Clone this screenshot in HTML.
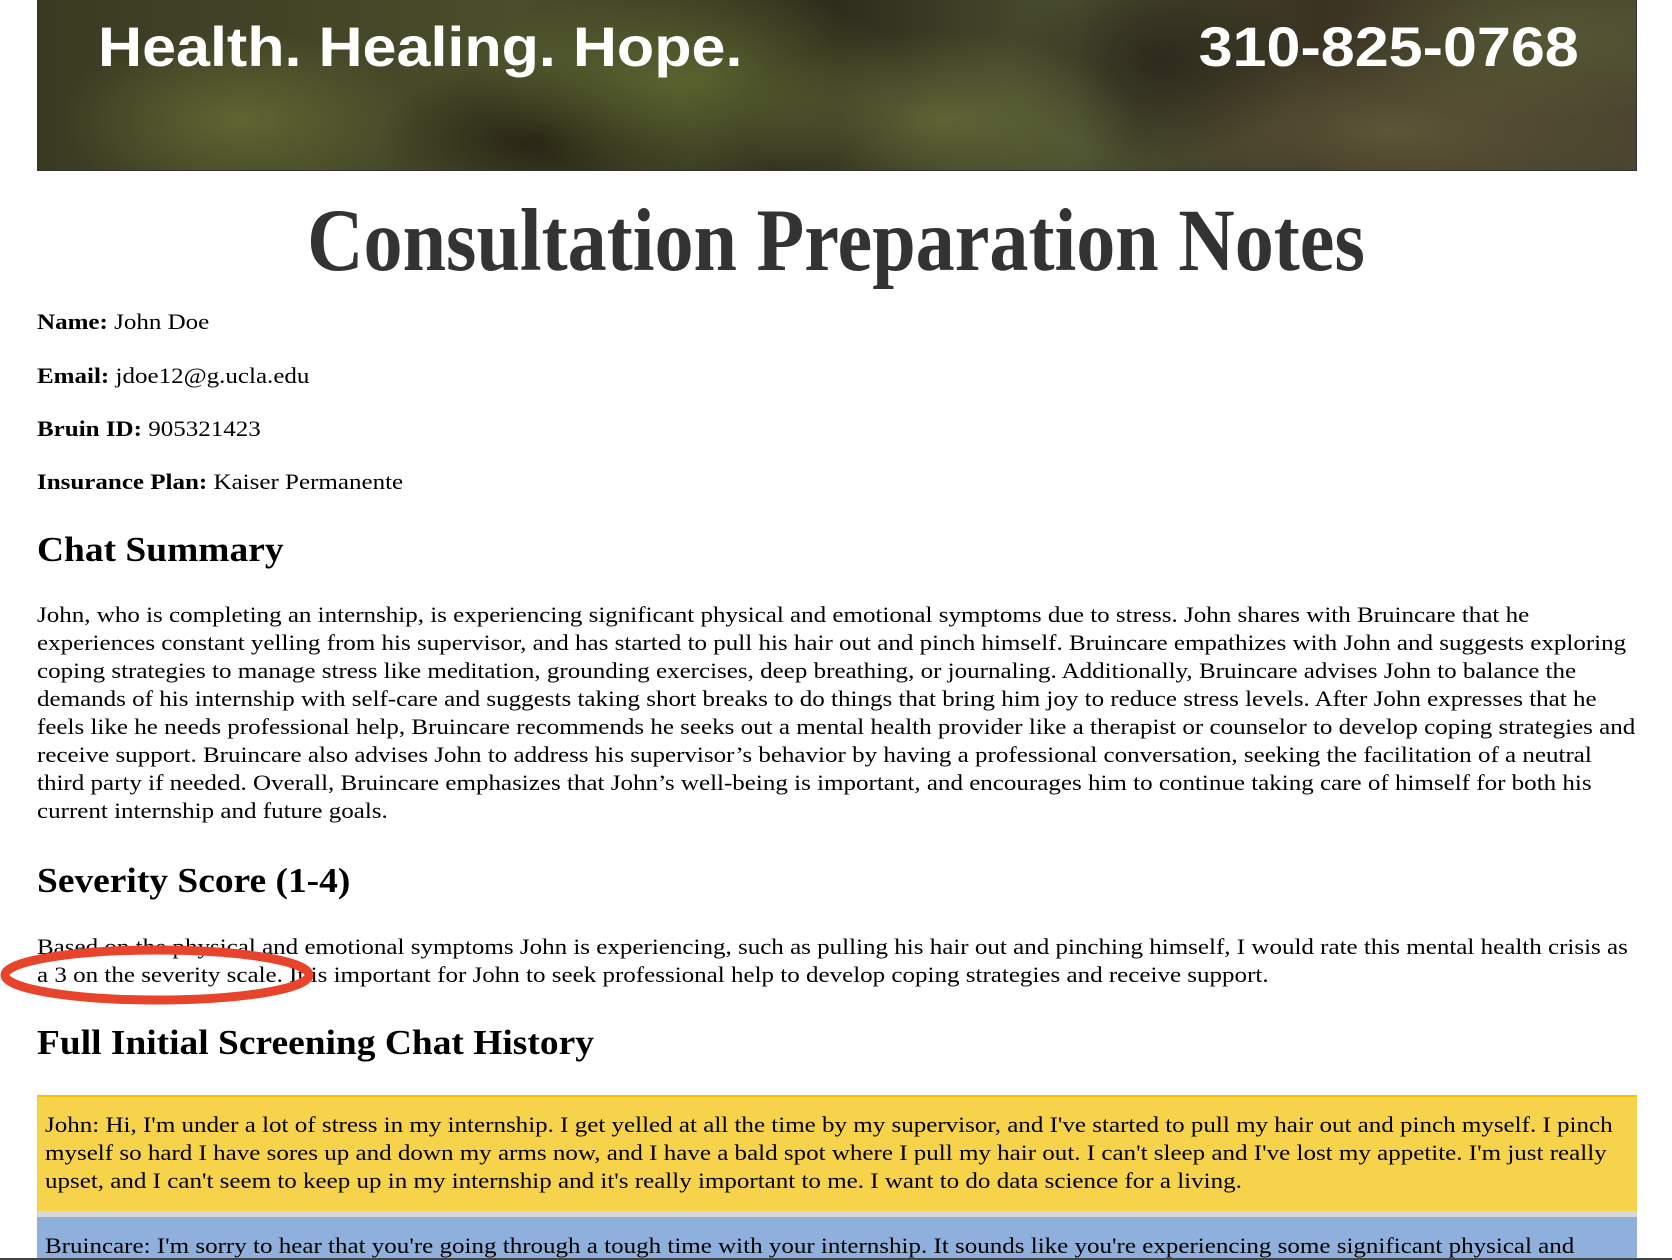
<!DOCTYPE html>
<html><head><meta charset="utf-8"><style>
html,body{margin:0;padding:0;background:#fff;width:1672px;height:1260px;overflow:hidden;position:relative;font-family:"Liberation Serif",serif;color:#000}
.a{position:absolute;white-space:nowrap}
.banner{position:absolute;left:37px;top:0;width:1598px;height:170px;border:1px solid #333;border-top:none;overflow:hidden;
background:
radial-gradient(ellipse 180px 90px at 200px 120px,rgba(120,130,60,.55),transparent),
radial-gradient(ellipse 220px 100px at 650px 80px,rgba(110,125,55,.6),transparent),
radial-gradient(ellipse 160px 80px at 500px 140px,rgba(30,25,15,.8),transparent),
radial-gradient(ellipse 200px 90px at 900px 120px,rgba(130,140,70,.5),transparent),
radial-gradient(ellipse 150px 100px at 1120px 60px,rgba(40,35,25,.8),transparent),
radial-gradient(ellipse 250px 90px at 1350px 130px,rgba(120,110,70,.55),transparent),
radial-gradient(ellipse 200px 80px at 1500px 40px,rgba(100,110,60,.5),transparent),
linear-gradient(90deg,#3a3a22,#4a4e2a 30%,#2e2c1c 50%,#4b5030 65%,#3a3322 80%,#4c4630);}
.bt{position:absolute;top:17px;font-family:"Liberation Sans",sans-serif;font-weight:bold;font-size:56px;line-height:60px;color:#fff;white-space:nowrap;transform:scaleX(1.09)}
.p{font-size:22px;line-height:28px;transform:scaleX(1.137);transform-origin:0 0}
h2{margin:0;font-size:35px;line-height:40px;font-weight:bold;transform:scaleX(1.07);transform-origin:0 0}
</style></head><body>
<div class="banner">
<div class="bt" style="left:60px;transform-origin:0 0">Health. Healing. Hope.</div>
<div class="bt" style="right:57px;transform-origin:100% 0">310-825-0768</div>
</div>
<div class="a" style="left:0;width:1672px;text-align:center;top:191px;font-size:89px;line-height:100px;font-weight:bold;color:#333;transform:scaleX(0.878);transform-origin:50% 0">Consultation Preparation Notes</div>
<div class="a p" style="left:37px;top:308px"><b>Name:</b> John Doe</div>
<div class="a p" style="left:37px;top:362px"><b>Email:</b> jdoe12@g.ucla.edu</div>
<div class="a p" style="left:37px;top:415px"><b>Bruin ID:</b> 905321423</div>
<div class="a p" style="left:37px;top:468px"><b>Insurance Plan:</b> Kaiser Permanente</div>
<h2 class="a" style="left:37px;top:530px">Chat Summary</h2>
<div class="a p" style="left:37px;top:601px">John, who is completing an internship, is experiencing significant physical and emotional symptoms due to stress. John shares with Bruincare that he<br>experiences constant yelling from his supervisor, and has started to pull his hair out and pinch himself. Bruincare empathizes with John and suggests exploring<br>coping strategies to manage stress like meditation, grounding exercises, deep breathing, or journaling. Additionally, Bruincare advises John to balance the<br>demands of his internship with self-care and suggests taking short breaks to do things that bring him joy to reduce stress levels. After John expresses that he<br>feels like he needs professional help, Bruincare recommends he seeks out a mental health provider like a therapist or counselor to develop coping strategies and<br>receive support. Bruincare also advises John to address his supervisor’s behavior by having a professional conversation, seeking the facilitation of a neutral<br>third party if needed. Overall, Bruincare emphasizes that John’s well-being is important, and encourages him to continue taking care of himself for both his<br>current internship and future goals.</div>
<h2 class="a" style="left:37px;top:861px">Severity Score (1-4)</h2>
<div class="a p" style="left:37px;top:933px">Based on the physical and emotional symptoms John is experiencing, such as pulling his hair out and pinching himself, I would rate this mental health crisis as<br>a 3 on the severity scale. It is important for John to seek professional help to develop coping strategies and receive support.</div>
<svg class="a" style="left:0;top:931px" width="330" height="90"><ellipse cx="157" cy="44" rx="152" ry="25" fill="none" stroke="#e8432b" stroke-width="9"/></svg>
<h2 class="a" style="left:37px;top:1023px">Full Initial Screening Chat History</h2>
<div class="a" style="left:37px;top:1095px;width:1600px;height:116px;background:#f6d34a;border-top:2px solid #f2c200;box-sizing:border-box"></div>
<div class="a p" style="left:45px;top:1111px">John: Hi, I'm under a lot of stress in my internship. I get yelled at all the time by my supervisor, and I've started to pull my hair out and pinch myself. I pinch<br>myself so hard I have sores up and down my arms now, and I have a bald spot where I pull my hair out. I can't sleep and I've lost my appetite. I'm just really<br>upset, and I can't seem to keep up in my internship and it's really important to me. I want to do data science for a living.</div>
<div class="a" style="left:37px;top:1211px;width:1600px;height:6px;background:#d8d8d8"></div>
<div class="a" style="left:37px;top:1217px;width:1600px;height:43px;background:#8fb0dd"></div>
<div class="a p" style="left:45px;top:1232px">Bruincare: I'm sorry to hear that you're going through a tough time with your internship. It sounds like you're experiencing some significant physical and</div>
<div class="a" style="left:0;top:1258px;width:1672px;height:2px;background:#444"></div>
</body></html>
